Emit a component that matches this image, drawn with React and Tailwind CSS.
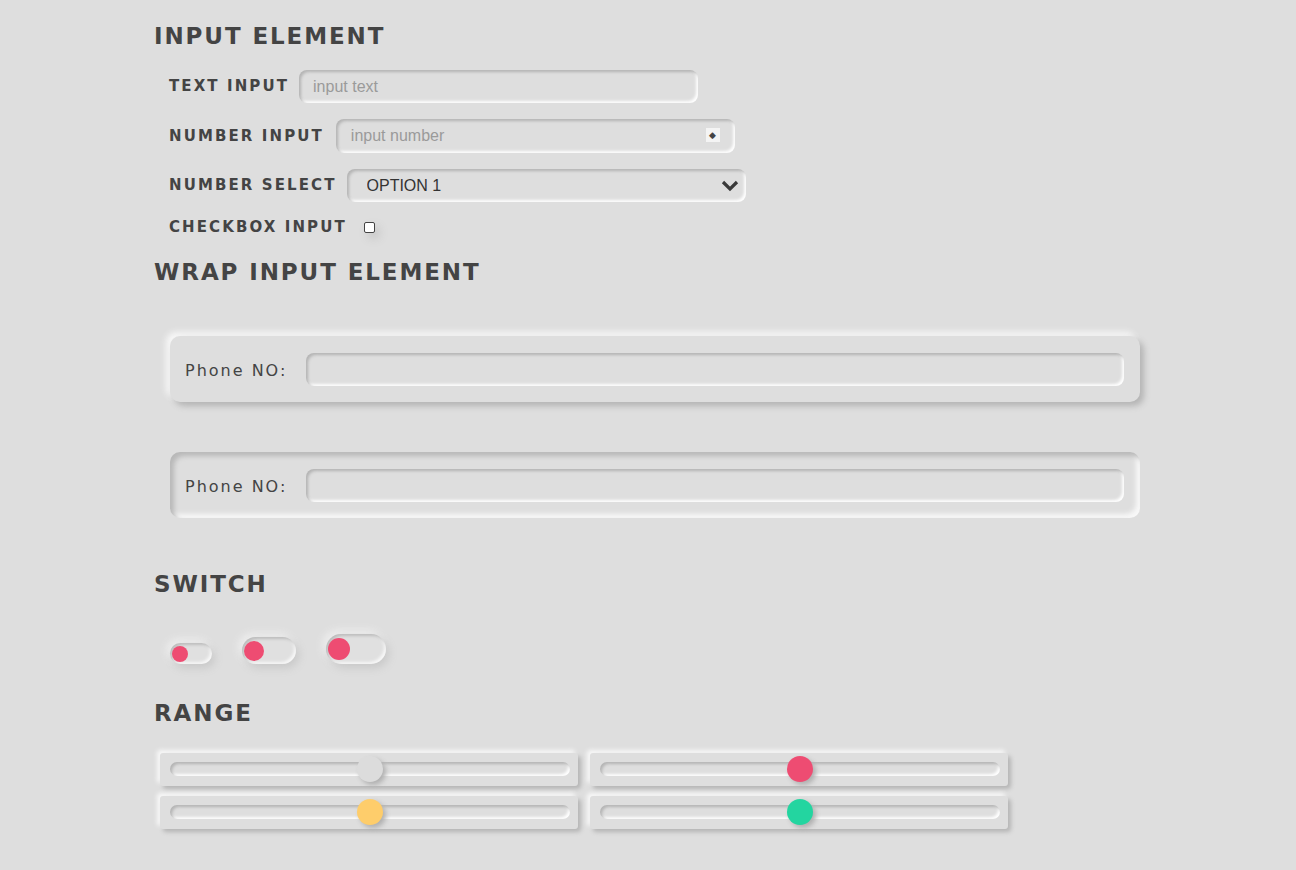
import { useState } from 'react';

const heading =
  "h-[30px] leading-[30px] text-[23px] font-bold tracking-[1.9px] text-[#444] font-['DejaVu_Sans',sans-serif]";
const label =
  "text-[15px] font-bold tracking-[2.1px] text-[#444] font-['DejaVu_Sans',sans-serif]";
const inset =
  'bg-[#dedede] rounded-[8px] shadow-[inset_2px_2px_3px_#b4b4b4,inset_-2px_-2px_3px_#ffffff]';

const Switch = ({ w, h, knob }) => (
  <div
    className="flex items-center rounded-full bg-[#e0e0e0] px-[2px] shadow-[inset_2px_2px_3px_#bdbdbd,inset_-2px_-2px_3px_#f7f7f7,3px_4px_8px_#c8c8c8,-3px_-3px_8px_#f2f2f2]"
    style={{ width: w, height: h }}
  >
    <div className="rounded-full bg-[#ee4c72]" style={{ width: knob, height: knob }} />
  </div>
);

const Range = ({ color }) => (
  <div className="h-[33px] w-[418px] rounded-[3px] bg-[#dedede] pl-[10px] pr-[8px] pt-[9px] shadow-[3px_3px_4px_#b5b5b5,-3px_-3px_4px_#f8f8f8]">
    <div className="relative h-[14px] rounded-full bg-[#dedede] shadow-[inset_2px_2px_3px_#b4b4b4,inset_-2px_-2px_3px_#ffffff]">
      <div
        className={`absolute left-1/2 top-1/2 h-[26px] w-[26px] -translate-x-1/2 -translate-y-1/2 rounded-full shadow-[3px_3px_5px_#b0b0b0] ${color}`}
      />
    </div>
  </div>
);

const WrapBox = ({ kind }) => (
  <div
    className={`ml-[16px] flex h-[66px] w-[970px] items-center gap-[19px] rounded-[10px] bg-[#dedede] pl-[15px] pr-[16px] ${kind}`}
  >
    <span className="mt-[3px] text-[16px] tracking-[2px] text-[#444] font-['DejaVu_Sans',sans-serif]">
      Phone NO:
    </span>
    <input type="text" className={`h-[33px] flex-1 px-3 text-[16px] outline-none ${inset}`} />
  </div>
);

const App = () => {
  const [option, setOption] = useState('1');
  return (
    <div className="min-h-[870px] bg-[#dedede] pl-[154px] pt-[21px] font-['Liberation_Sans',Arial,sans-serif]">
      <h2 className={heading}>INPUT ELEMENT</h2>

      <div className="mt-[19px] flex flex-col gap-4 pl-[15px]">
        <div className="flex items-center gap-[10px]">
          <span className={label}>TEXT INPUT</span>
          <input
            type="text"
            placeholder="input text"
            className={`h-[33px] w-[399px] pl-[14px] text-[16px] text-[#333] outline-none placeholder:text-[#9a9a9a] ${inset}`}
          />
        </div>
        <div className="flex items-center gap-[12px]">
          <span className={label}>NUMBER INPUT</span>
          <div className="relative">
            <input
              type="text"
              placeholder="input number"
              className={`h-[34px] w-[399px] pl-[15px] text-[16px] text-[#333] outline-none placeholder:text-[#9a9a9a] ${inset}`}
            />
            <div className="absolute right-[15px] top-[9px] flex h-[14px] w-[14px] items-center justify-center bg-[#f4f4f4] text-[9px] leading-none text-[#444]">
              ◆
            </div>
          </div>
        </div>
        <div className="flex items-center gap-[10px]">
          <span className={label}>NUMBER SELECT</span>
          <div className="relative">
            <select
              value={option}
              onChange={(e) => setOption(e.target.value)}
              className={`h-[33px] w-[399px] appearance-none pl-5 text-[16px] text-[#333] outline-none ${inset}`}
            >
              <option value="1">OPTION 1</option>
              <option value="2">OPTION 2</option>
              <option value="3">OPTION 3</option>
            </select>
            <svg
              className="pointer-events-none absolute right-[7px] top-[10px]"
              width="18"
              height="14"
              viewBox="0 0 18 14"
            >
              <path d="M2 3 L9 10 L16 3" fill="none" stroke="#3a3a3a" strokeWidth="3.2" />
            </svg>
          </div>
        </div>
        <div className="flex h-[18px] items-center gap-[17px]">
          <span className={label}>CHECKBOX INPUT</span>
          <div className="h-[11px] w-[11px] rounded-[2px] border-[1.5px] border-[#444] bg-white shadow-[4px_5px_10px_#c4c4c4]" />
        </div>
      </div>

      <h2 className={`${heading} mt-[21px]`}>WRAP INPUT ELEMENT</h2>

      <div className="mt-[49px]">
        <WrapBox kind="shadow-[4px_4px_6px_#b4b4b4,-4px_-4px_6px_#f8f8f8]" />
      </div>
      <div className="mt-[50px]">
        <WrapBox kind="shadow-[inset_4px_4px_5px_#b8b8b8,inset_-4px_-4px_5px_#f8f8f8]" />
      </div>

      <h2 className={`${heading} mt-[51px]`}>SWITCH</h2>

      <div className="ml-[16px] mt-[35px] flex h-[30px] items-end gap-[30px]">
        <Switch w={42} h={21} knob={16} />
        <Switch w={54} h={27} knob={20} />
        <Switch w={60} h={30} knob={22} />
      </div>

      <h2 className={`${heading} mt-[34px]`}>RANGE</h2>

      <div className="ml-[6px] mt-[25px] grid w-[848px] grid-cols-2 gap-x-[12px] gap-y-[10px]">
        <Range color="bg-[#dcdcdc]" />
        <Range color="bg-[#ee4c72]" />
        <Range color="bg-[#fecd6b]" />
        <Range color="bg-[#23d5a0]" />
      </div>
    </div>
  );
};

export default App;
